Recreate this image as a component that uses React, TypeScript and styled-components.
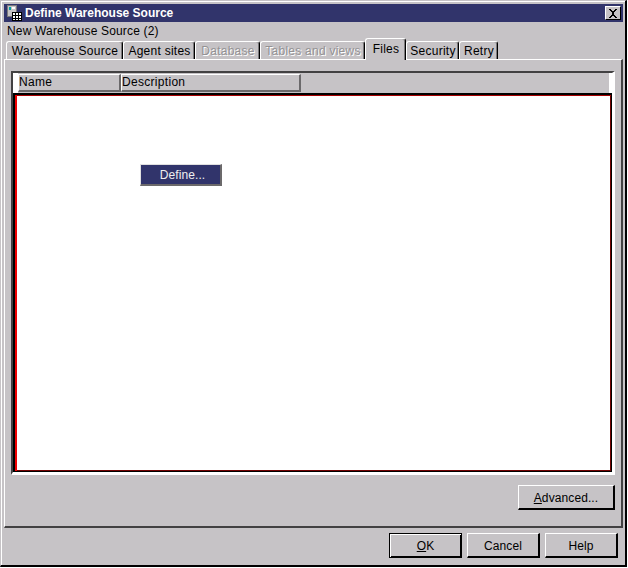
import styled, { createGlobalStyle } from "styled-components";

const GlobalStyle = createGlobalStyle`
  html, body {
    margin: 0;
    padding: 0;
    background: #ffffff;
  }
`;

const TABS = [
  { label: "Warehouse Source", width: 117 },
  { label: "Agent sites", width: 72 },
  { label: "Database", width: 65, disabled: true },
  { label: "Tables and views", width: 105, disabled: true },
  { label: "Files", width: 41, active: true },
  { label: "Security", width: 53 },
  { label: "Retry", width: 39 },
];

const WindowIcon = () => (
  <svg width="16" height="16" viewBox="0 0 16 16" shapeRendering="crispEdges">
    <rect x="1.5" y="0.5" width="9" height="11" fill="#c6c3c6" stroke="#7b797b" />
    <rect x="3" y="2" width="2" height="3" fill="#00a2a2" />
    <rect x="6" y="2" width="3" height="2" fill="#ffffff" />
    <rect x="6.5" y="7.5" width="9" height="8" fill="#ffffff" stroke="#000000" />
    <path d="M6 10.5h9M6 13h9M9.5 8v7M12.5 8v7" stroke="#000000" fill="none" />
  </svg>
);

const CloseIcon = () => (
  <svg width="10" height="9" viewBox="0 0 10 9" shapeRendering="crispEdges">
    <path
      d="M1 0h2v1h1v1h2V1h1V0h2v1H8v1H7v1H6v3h1v1h1v1h1v1H7V8H6V7H4v1H3v1H1V8h1V7h1V6h1V3H3V2H2V1H1z"
      fill="#000000"
    />
  </svg>
);

const App = () => {
  return (
    <>
      <GlobalStyle />
      <Window>
        <TitleBar>
          <WindowIcon />
          <TitleText>Define Warehouse Source</TitleText>
          <CloseButton>
            <CloseIcon />
          </CloseButton>
        </TitleBar>
        <SubTitle>New Warehouse Source (2)</SubTitle>
        <TabRow>
          {TABS.map((tab) => (
            <Tab
              key={tab.label}
              $width={tab.width}
              $active={tab.active}
              $disabled={tab.disabled}
            >
              {tab.label}
            </Tab>
          ))}
        </TabRow>
        <Panel>
          <Well>
            <HeaderRow>
              <HeaderCell $width={103}>Name</HeaderCell>
              <HeaderCell $width={180}>Description</HeaderCell>
            </HeaderRow>
            <Canvas>
              <DefineButton>Define...</DefineButton>
            </Canvas>
          </Well>
          <PanelActions>
            <Button $width={97}>
              <u>A</u>dvanced...
            </Button>
          </PanelActions>
        </Panel>
        <Footer>
          <Button $width={73} $primary>
            <u>O</u>K
          </Button>
          <Button $width={73}>Cancel</Button>
          <Button $width={73}>Help</Button>
        </Footer>
      </Window>
    </>
  );
};

const Window = styled.div`
  box-sizing: border-box;
  display: flex;
  flex-direction: column;
  width: 627px;
  height: 567px;
  padding: 3px 2px 1px 3px;
  background: #c6c3c6;
  border-top: 1px solid #c6c3c6;
  border-left: 1px solid #c6c3c6;
  border-right: 2px solid #000000;
  border-bottom: 2px solid #000000;
  box-shadow: inset 1px 1px 0 #ffffff;
  font-family: "Liberation Sans", Arial, sans-serif;
  font-size: 12px;
  color: #000000;
`;

const TitleBar = styled.div`
  display: flex;
  align-items: center;
  flex: none;
  height: 18px;
  padding: 0 2px;
  background: #31346b;
`;

const TitleText = styled.span`
  margin-left: 3px;
  color: #ffffff;
  font-weight: 700;
  font-size: 12px;
`;

const CloseButton = styled.div`
  box-sizing: border-box;
  display: flex;
  align-items: center;
  justify-content: center;
  width: 16px;
  height: 14px;
  margin-left: auto;
  background: #c6c3c6;
  border-top: 1px solid #ffffff;
  border-left: 1px solid #ffffff;
  border-right: 1px solid #000000;
  border-bottom: 1px solid #000000;
`;

const SubTitle = styled.div`
  flex: none;
  height: 17px;
  padding-left: 3px;
  line-height: 18px;
  letter-spacing: 0.17px;
`;

const TabRow = styled.div`
  display: flex;
  align-items: flex-end;
  flex: none;
  height: 21px;
  padding-left: 2px;
  margin-bottom: -1px;
  position: relative;
  z-index: 1;
`;

const Tab = styled.div<{ $width: number; $active?: boolean; $disabled?: boolean }>`
  box-sizing: border-box;
  flex: none;
  width: ${({ $width }) => $width}px;
  height: ${({ $active }) => ($active ? 22 : 18)}px;
  margin-bottom: ${({ $active }) => ($active ? 0 : 1)}px;
  padding-top: ${({ $active }) => ($active ? 2 : 1)}px;
  padding-left: 1px;
  text-align: center;
  line-height: 17px;
  letter-spacing: 0.25px;
  white-space: nowrap;
  background: #c6c3c6;
  border-top: 1px solid #ffffff;
  border-left: 1px solid #ffffff;
  border-right: 1px solid #000000;
  box-shadow: inset -1px 0 0 #7b797b;
  border-top-left-radius: 3px;
  border-top-right-radius: 3px;
  color: ${({ $disabled }) => ($disabled ? "#949294" : "#000000")};
  text-shadow: ${({ $disabled }) => ($disabled ? "1px 1px 0 #ffffff" : "none")};
`;

const Panel = styled.div`
  box-sizing: border-box;
  display: flex;
  flex-direction: column;
  flex: 1;
  min-height: 0;
  padding: 11px 6px 0 6px;
  border-top: 1px solid #ffffff;
  border-left: 1px solid #ffffff;
  border-right: 2px solid #424142;
  border-bottom: 2px solid #424142;
`;

const Well = styled.div`
  box-sizing: border-box;
  display: flex;
  flex-direction: column;
  flex: none;
  height: 404px;
  background: #ffffff;
  border-top: 2px solid #424142;
  border-left: 2px solid #424142;
  border-right: 3px double #ffffff;
  border-bottom: 3px double #ffffff;
`;

const HeaderRow = styled.div`
  display: flex;
  flex: none;
  height: 20px;
  margin-right: 3px;
  padding-top: 1px;
  box-sizing: border-box;
  background: #c6c3c6;
  border-left: 5px solid #ffffff;
`;

const HeaderCell = styled.div<{ $width: number }>`
  box-sizing: border-box;
  flex: none;
  width: ${({ $width }) => $width}px;
  height: 18px;
  line-height: 15px;
  letter-spacing: 0.3px;
  border-top: 1px solid #ffffff;
  border-left: 1px solid #ffffff;
  border-right: 2px solid #6b696b;
  border-bottom: 2px solid #6b696b;
`;

const Canvas = styled.div`
  position: relative;
  flex: 1;
  box-sizing: border-box;
  background: #ffffff;
  border-top: 2px solid #000000;
  border-left: 2px solid #000000;
  border-right: 1px solid #000000;
  border-bottom: 1px solid #000000;
  box-shadow:
    inset 2px 0 0 #f00000,
    inset 0 1px 0 #a80000,
    inset -1px -1px 0 #700000;
`;

const DefineButton = styled.div`
  position: absolute;
  left: 125px;
  top: 69px;
  box-sizing: border-box;
  width: 82px;
  height: 22px;
  padding-left: 4px;
  text-align: center;
  line-height: 20px;
  letter-spacing: 0.1px;
  color: #efefef;
  background: #31346b;
  border-top: 1px solid #e0e0e0;
  border-left: 1px solid #e0e0e0;
  border-right: 2px solid #6b696b;
  border-bottom: 2px solid #6b696b;
`;

const PanelActions = styled.div`
  display: flex;
  justify-content: flex-end;
  flex: none;
  padding-top: 10px;
`;

const Button = styled.div<{ $width: number; $primary?: boolean }>`
  box-sizing: border-box;
  flex: none;
  width: ${({ $width }) => $width}px;
  height: 25px;
  text-align: center;
  line-height: 25px;
  letter-spacing: 0.1px;
  background: #c6c3c6;
  border-top: 1px solid ${({ $primary }) => ($primary ? "#000000" : "#ffffff")};
  border-left: 1px solid ${({ $primary }) => ($primary ? "#000000" : "#ffffff")};
  border-right: ${({ $primary }) => ($primary ? 1 : 2)}px solid #000000;
  border-bottom: ${({ $primary }) => ($primary ? 1 : 2)}px solid #000000;
  box-shadow: ${({ $primary }) =>
    $primary ? "inset 1px 1px 0 #ffffff, inset -1px -1px 0 #000000" : "none"};
`;

const Footer = styled.div`
  display: flex;
  justify-content: flex-end;
  flex: none;
  gap: 5px;
  height: 36px;
  box-sizing: border-box;
  padding: 5px 5px 0 0;
`;

export default App;
